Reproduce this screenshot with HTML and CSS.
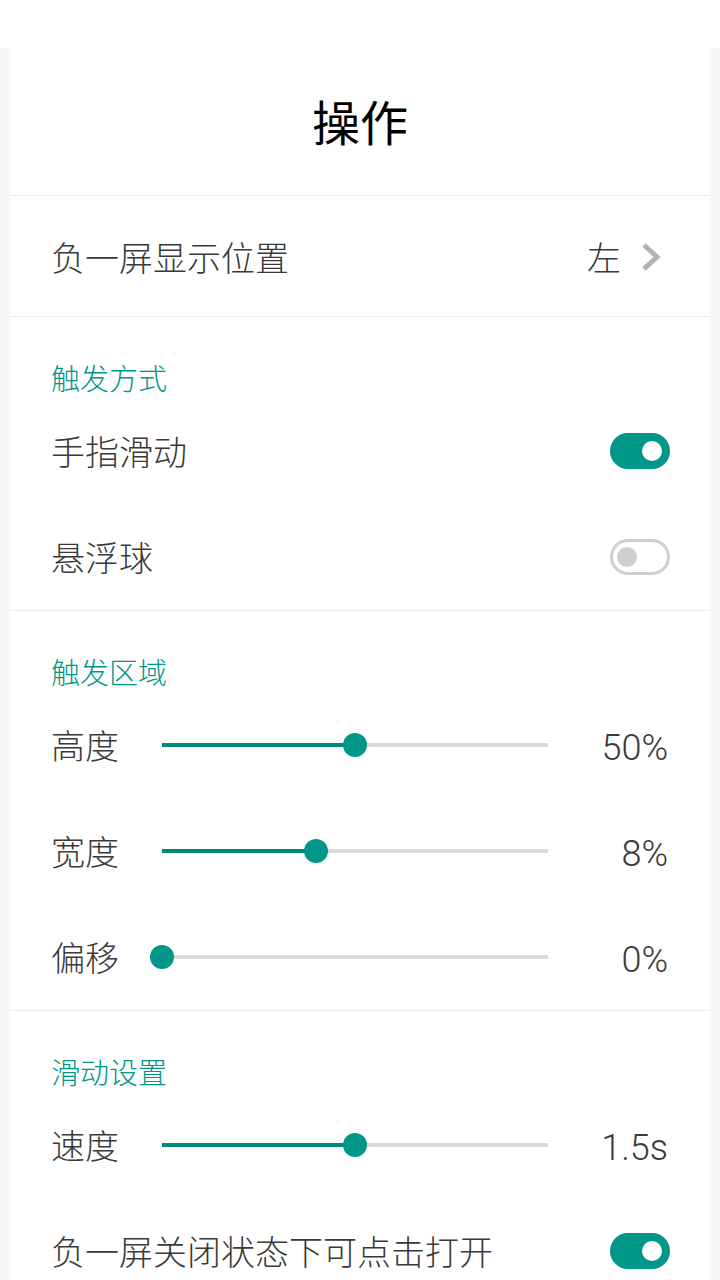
FILE: index.html
```html
<!DOCTYPE html>
<html lang="zh-CN">
<head>
<meta charset="utf-8">
<title>操作</title>
<link rel="stylesheet" href="styles.css">
</head>
<body>
<div class="statusbar"></div>
<main class="card">
  <header class="title-bar"><h1 class="title">操作</h1></header>

  <div class="nav-row">
    <span class="label">负一屏显示位置</span>
    <span class="nav-value">左
      <svg class="chev" width="20" height="28" viewBox="0 0 20 28"><polyline points="3,2 16,14 3,26" fill="none" stroke="#b3b3b3" stroke-width="5" stroke-linejoin="miter"/></svg>
    </span>
  </div>

  <section class="section">
    <h2 class="section-title">触发方式</h2>
    <div class="row">
      <span class="label">手指滑动</span>
      <span class="switch on"><span class="knob"></span></span>
    </div>
    <div class="row">
      <span class="label">悬浮球</span>
      <span class="switch off"><span class="knob"></span></span>
    </div>
  </section>

  <section class="section">
    <h2 class="section-title">触发区域</h2>
    <div class="row">
      <span class="label slabel">高度</span>
      <div class="slider" style="--v:50%"><div class="track"><div class="fill"></div></div><div class="thumb"></div></div>
      <span class="value">50%</span>
    </div>
    <div class="row">
      <span class="label slabel">宽度</span>
      <div class="slider" style="--v:40%"><div class="track"><div class="fill"></div></div><div class="thumb"></div></div>
      <span class="value">8%</span>
    </div>
    <div class="row">
      <span class="label slabel">偏移</span>
      <div class="slider" style="--v:0%"><div class="track"><div class="fill"></div></div><div class="thumb"></div></div>
      <span class="value">0%</span>
    </div>
  </section>

  <section class="section last">
    <h2 class="section-title">滑动设置</h2>
    <div class="row">
      <span class="label slabel">速度</span>
      <div class="slider" style="--v:50%"><div class="track"><div class="fill"></div></div><div class="thumb"></div></div>
      <span class="value">1.5s</span>
    </div>
    <div class="row">
      <span class="label">负一屏关闭状态下可点击打开</span>
      <span class="switch on"><span class="knob"></span></span>
    </div>
  </section>
</main>
</body>
</html>
```

FILE: styles.css
```css
* { box-sizing: border-box; }
html, body {
  margin: 0;
  padding: 0;
}
body {
  width: 720px;
  height: 1280px;
  overflow: hidden;
  background: #f7f7f7;
  font-family: "Noto Sans CJK SC", "Noto Sans", sans-serif;
  font-weight: 300;
  color: #444444;
}
.statusbar {
  height: 48px;
  background: #ffffff;
}
.card {
  margin: 0 10px;
  background: #ffffff;
  min-height: 1232px;
}
.title-bar {
  height: 148px;
  padding-top: 43px;
  border-bottom: 1px solid #ececec;
  display: flex;
  justify-content: center;
}
.title {
  margin: 0;
  font-size: 48px;
  line-height: 58px;
  font-weight: 400;
  color: #000000;
}
.nav-row {
  height: 121px;
  padding: 2px 49px 0 41px;
  border-bottom: 1px solid #ececec;
  display: flex;
  align-items: center;
  justify-content: space-between;
}
.label {
  font-size: 34px;
  line-height: 40px;
  font-weight: 300;
  color: #3a3a3a;
  white-space: nowrap;
}
.nav-value {
  display: flex;
  align-items: center;
  gap: 20px;
  font-size: 34px;
  line-height: 40px;
  font-weight: 300;
  color: #3a3a3a;
}
.chev { display: block; }
.section {
  border-bottom: 1px solid #ececec;
}
.section.last { border-bottom: none; }
.section-title {
  margin: 0;
  height: 81px;
  padding: 43px 41px 4px;
  font-size: 29px;
  line-height: 34px;
  font-weight: 300;
  color: #009688;
}
.row {
  height: 106px;
  padding: 0 40px 0 41px;
  display: flex;
  align-items: center;
  justify-content: space-between;
}
.slabel {
  flex: 0 0 111px;
}
.slider {
  flex: 0 0 386px;
  position: relative;
  height: 24px;
}
.track {
  position: absolute;
  left: 0;
  right: 0;
  top: 10px;
  height: 4px;
  background: #d9d9d9;
}
.fill {
  width: var(--v);
  height: 100%;
  background: #00897b;
}
.thumb {
  position: absolute;
  top: 0;
  left: var(--v);
  width: 24px;
  height: 24px;
  border-radius: 50%;
  background: #009688;
  transform: translateX(-50%);
}
.value {
  flex: 1;
  text-align: right;
  font-family: Roboto, "Noto Sans CJK SC", sans-serif;
  font-size: 36px;
  line-height: 40px;
  padding-top: 5px;
  font-weight: 300;
  color: #3a3a3a;
  margin-right: 2px;
}
.switch {
  width: 60px;
  height: 36px;
  border-radius: 18px;
  display: flex;
  align-items: center;
}
.switch.on {
  background: #009688;
  justify-content: flex-end;
  padding-right: 8px;
}
.switch.on .knob {
  width: 20px;
  height: 20px;
  border-radius: 50%;
  background: #ffffff;
}
.switch.off {
  background: #ffffff;
  border: 3px solid #cfcfcf;
  padding-left: 4px;
}
.switch.off .knob {
  width: 20px;
  height: 20px;
  border-radius: 50%;
  background: #cfcfcf;
}
```
